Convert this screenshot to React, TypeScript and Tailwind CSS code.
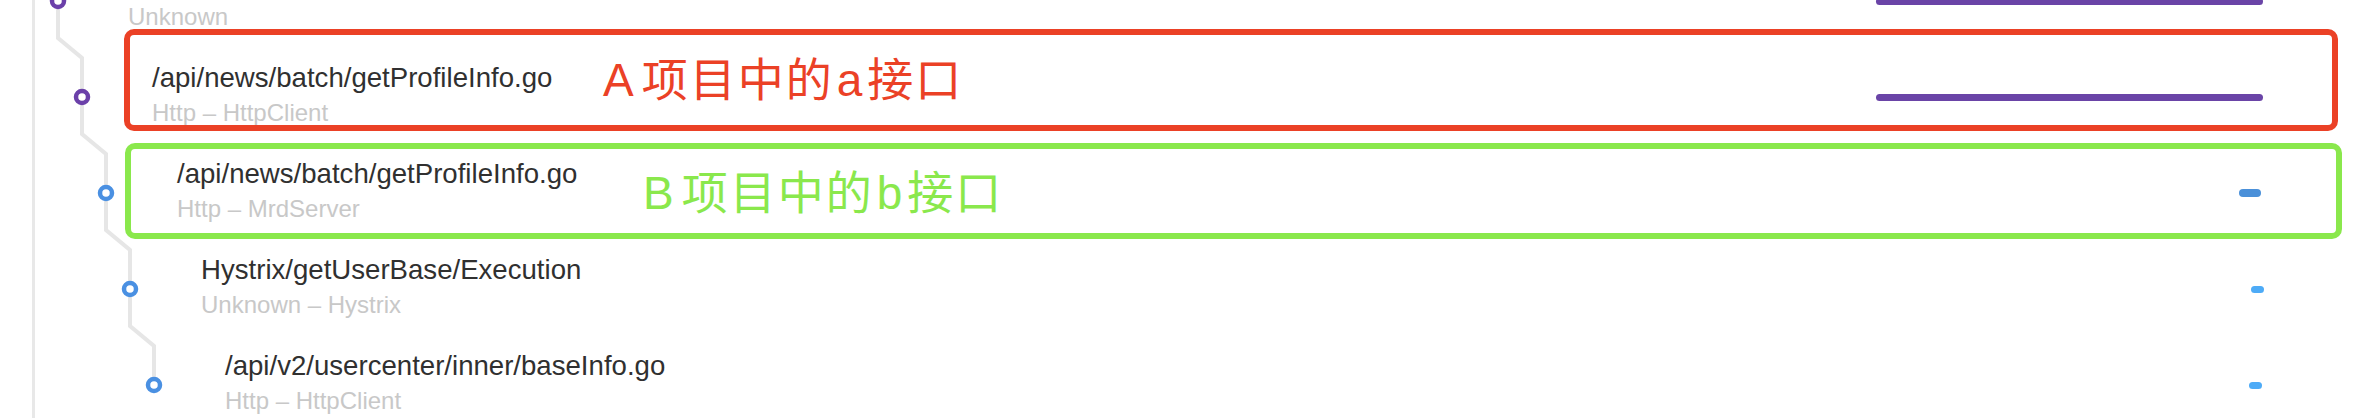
import React from "react";

type Row = {
  title: string;
  sub: string;
  textX: number;
  cx: number;
  color: string;
  bar: { left: number; width: number; height: number; color: string };
  outgoing: boolean;
  incomingTop?: boolean;
};

const rows: Row[] = [
  {
    title: "/api/news/batch/getProfileInfo.go",
    sub: "Unknown",
    textX: 128,
    cx: 58,
    color: "#6b40a9",
    bar: { left: 16, width: 387, height: 7, color: "#6a44a7" },
    outgoing: true,
    incomingTop: true,
  },
  {
    title: "/api/news/batch/getProfileInfo.go",
    sub: "Http – HttpClient",
    textX: 152,
    cx: 82,
    color: "#6b40a9",
    bar: { left: 16, width: 387, height: 7, color: "#6a44a7" },
    outgoing: true,
  },
  {
    title: "/api/news/batch/getProfileInfo.go",
    sub: "Http – MrdServer",
    textX: 177,
    cx: 106,
    color: "#4a90e2",
    bar: { left: 379, width: 22, height: 8, color: "#4a90d9" },
    outgoing: true,
  },
  {
    title: "Hystrix/getUserBase/Execution",
    sub: "Unknown – Hystrix",
    textX: 201,
    cx: 130,
    color: "#4a90e2",
    bar: { left: 391, width: 13, height: 7, color: "#4dabf7" },
    outgoing: true,
  },
  {
    title: "/api/v2/usercenter/inner/baseInfo.go",
    sub: "Http – HttpClient",
    textX: 225,
    cx: 154,
    color: "#4a90e2",
    bar: { left: 389, width: 13, height: 7, color: "#4dabf7" },
    outgoing: false,
  },
];

function Gutter({ row }: { row: Row }) {
  const { cx } = row;
  return (
    <svg
      width={row.textX}
      height={96}
      className="shrink-0 overflow-visible"
      viewBox={`0 0 ${row.textX} 96`}
    >
      <line x1={33.5} y1={0} x2={33.5} y2={96} stroke="#e8e8e8" strokeWidth={3} />
      {row.incomingTop && (
        <line x1={cx} y1={-60} x2={cx} y2={48} stroke="#e6e6e6" strokeWidth={4} />
      )}
      {row.outgoing && (
        <path
          d={`M ${cx} 48 V 85 L ${cx + 24} 105 V 144`}
          fill="none"
          stroke="#e6e6e6"
          strokeWidth={4}
          strokeLinejoin="miter"
        />
      )}
      <circle cx={cx} cy={48} r={6} fill="#ffffff" stroke={row.color} strokeWidth={4.5} />
    </svg>
  );
}

function TraceRow({ row }: { row: Row }) {
  return (
    <div className="flex h-[96px] items-start">
      <Gutter row={row} />
      <div className="flex min-w-0 flex-1 flex-col pt-[12px]">
        <div className="whitespace-nowrap text-[27.6px] leading-[34px] text-[#303030]">
          {row.title}
        </div>
        <div className="mt-[1px] whitespace-nowrap text-[24px] leading-[34px] text-[#c8c8c8]">
          {row.sub}
        </div>
      </div>
      <div className="mr-[76px] flex w-[420px] shrink-0 flex-col">
        <div
          className="rounded-full"
          style={{
            marginLeft: row.bar.left,
            width: row.bar.width,
            height: row.bar.height,
            marginTop: 48 - row.bar.height / 2,
            backgroundColor: row.bar.color,
          }}
        />
      </div>
    </div>
  );
}

function Label({ big, small, color }: { big: string; small: string; color: string }) {
  return (
    <span
      className="whitespace-nowrap font-['Liberation_Sans','Noto_Sans_CJK_SC',sans-serif] text-[46px] leading-none tracking-[2px]"
      style={{ color }}
    >
      <span className="mr-[6px]">{big}</span>
      项目中的
      <span className="mx-[3px]">{small}</span>
      接口
    </span>
  );
}

export default function App() {
  return (
    <div className="relative h-[418px] w-[2356px] overflow-hidden bg-white font-['Liberation_Sans','Noto_Sans_CJK_SC',sans-serif]">
      <div className="-mt-[47px] flex flex-col">
        {rows.map((r, i) => (
          <TraceRow key={i} row={r} />
        ))}
      </div>

      {/* Annotation A */}
      <div className="absolute left-[124px] top-[29px] flex h-[102px] w-[2214px] items-center rounded-[10px] border-[6px] border-[#eb4126] pl-[473px]">
        <Label big="A" small="a" color="#eb4126" />
      </div>

      {/* Annotation B */}
      <div className="absolute left-[125px] top-[143px] flex h-[96px] w-[2217px] items-center rounded-[10px] border-[6px] border-[#8ae84c] pl-[512px] pt-[4px]">
        <Label big="B" small="b" color="#8ae84c" />
      </div>
    </div>
  );
}
